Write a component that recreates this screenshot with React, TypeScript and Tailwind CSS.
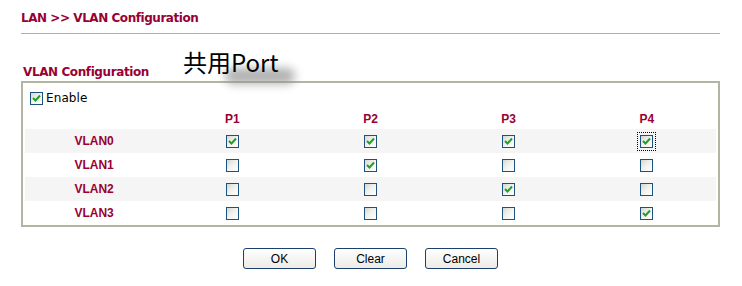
import React from 'react';

const matrix = [
  [true, true, true, true],
  [false, true, false, false],
  [false, false, true, false],
  [false, false, false, true],
];

function Box({ checked, focused }: { checked: boolean; focused?: boolean }) {
  const box = (
    <span className="relative inline-flex w-[13px] h-[13px] border border-[#1c5180] bg-gradient-to-br from-[#d8d8d2] via-[#f2f2ef] to-white items-center justify-center">
      {checked && (
        <svg width="9" height="8" viewBox="0 0 9 8" className="block">
          <path d="M1 4 L3.5 6.5 L8 1.5" fill="none" stroke="#21a121" strokeWidth="2" />
        </svg>
      )}
    </span>
  );
  if (!focused) return box;
  return <span className="inline-flex p-[2px] outline-1 outline-dotted outline-black">{box}</span>;
}

export default function App() {
  return (
    <div className="relative w-[742px] h-[286px] bg-white font-['Tahoma','DejaVu_Sans',sans-serif] text-[12px]">
      <div className="pl-[21px] pr-[22px] pt-[10px]">
        <h1 className="h-[16px] font-bold text-[12px] leading-[16px] text-[#990033] font-['DejaVu_Sans',sans-serif] tracking-[-0.45px]">
          LAN &gt;&gt; VLAN Configuration
        </h1>
        <div className="mt-[7px] border-t border-[#b0b0a0]" />

        <div className="relative mt-[30px] h-[17px] pl-[2px] font-bold text-[12px] leading-[16px] text-[#990033] font-['DejaVu_Sans',sans-serif] tracking-[-0.4px]">
          VLAN Configuration
          <span className="absolute left-[204px] top-[4px] w-[70px] h-[16px] rounded-full bg-[#909090] blur-[5px] opacity-70" />
          <span className="absolute left-[162px] top-[-14px] leading-none text-[24px] font-normal text-black tracking-normal font-['Noto_Sans_CJK_SC','Noto_Sans',sans-serif]">
            共用Port
          </span>
        </div>

        <div className="border-2 border-[#b4b4a2] h-[146px] pl-[2px] pr-[2px]">
          <label className="flex items-center gap-[3px] pl-[5px] pt-[8px] h-[22px] font-['DejaVu_Sans',sans-serif] text-[12px] tracking-[0.1px] text-black">
            <Box checked />
            Enable
          </label>
          <div className="grid grid-cols-5 h-[24px] items-center font-['Liberation_Sans',Arial,sans-serif] font-bold text-[12px] text-[#990033] text-center pt-[3px]">
            <span />
            <span>P1</span>
            <span>P2</span>
            <span>P3</span>
            <span>P4</span>
          </div>
          {matrix.map((row, i) => (
            <div
              key={i}
              className={`grid grid-cols-5 h-[24px] items-center text-center ${i % 2 === 0 ? 'bg-[#f5f5f5]' : 'bg-white'}`}
            >
              <span className="font-['Liberation_Sans',Arial,sans-serif] font-bold text-[12px] text-[#990033]">
                VLAN{i}
              </span>
              {row.map((v, j) => (
                <span key={j} className="flex justify-center">
                  <Box checked={v} focused={i === 0 && j === 3} />
                </span>
              ))}
            </div>
          ))}
        </div>

        <div className="flex justify-center gap-[18px] mt-[21px] font-['Liberation_Sans',Arial,sans-serif] text-[12px]">
          {['OK', 'Clear', 'Cancel'].map((t) => (
            <button
              key={t}
              className="w-[73px] h-[21px] rounded-[3px] border border-[#1c3f6e] bg-gradient-to-b from-white to-[#ecebe6] text-black"
            >
              {t}
            </button>
          ))}
        </div>
      </div>
    </div>
  );
}
